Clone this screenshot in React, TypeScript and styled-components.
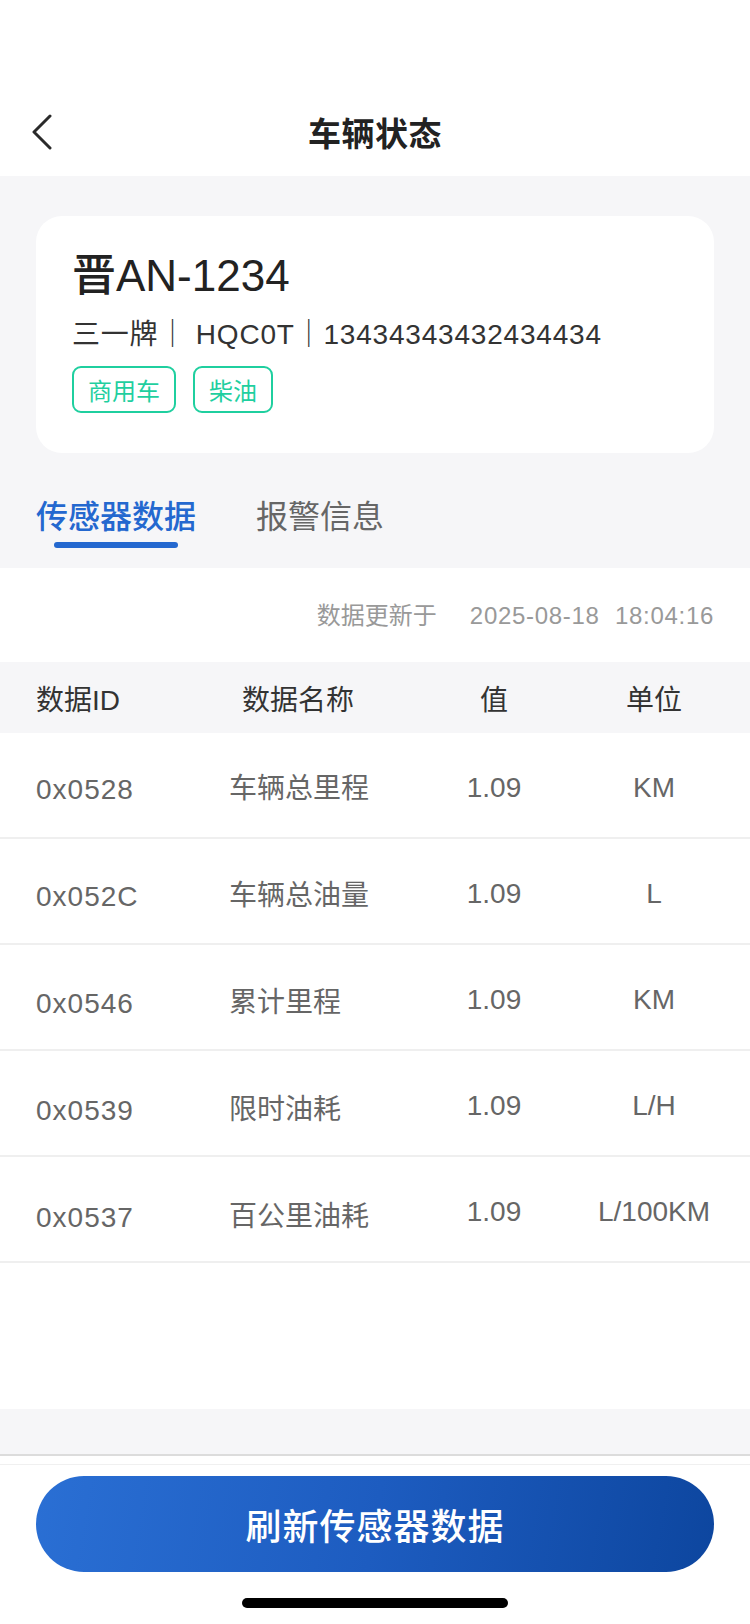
import styled, { createGlobalStyle } from "styled-components";

const GlobalStyle = createGlobalStyle`
  body {
    margin: 0;
    background: #f6f6f8;
    font-family: "Liberation Sans", "Noto Sans CJK SC", sans-serif;
  }
`;

const Page = styled.div`
  width: 750px;
  min-height: 1624px;
  display: flex;
  flex-direction: column;
  background: #f6f6f8;
`;

const NavBar = styled.header`
  height: 88px;
  padding-top: 88px;
  background: #fff;
  display: grid;
  grid-template-columns: 1fr auto 1fr;
  align-items: center;
`;

const BackButton = styled.button`
  justify-self: start;
  margin-left: 32px;
  padding: 0;
  border: none;
  background: none;
  display: flex;
  cursor: pointer;
`;

const NavTitle = styled.h1`
  margin: 0;
  font-size: 33px;
  font-weight: 700;
  color: #222;
  letter-spacing: 0.5px;
`;

const Content = styled.div`
  padding: 40px 36px 0;
`;

const VehicleCard = styled.section`
  background: #fff;
  border-radius: 26px;
  padding: 32px 36px 40px;
`;

const Plate = styled.div`
  font-size: 44px;
  line-height: 56px;
  font-weight: 500;
  color: #222;
`;

const VehicleMeta = styled.div`
  margin-top: 11px;
  font-size: 28px;
  line-height: 40px;
  letter-spacing: 0.8px;
  color: #333;
`;

const TagRow = styled.div`
  margin-top: 11px;
  display: flex;
  gap: 17px;
`;

const Tag = styled.span`
  box-sizing: border-box;
  height: 47px;
  padding: 0 14px;
  display: flex;
  align-items: center;
  border: 2px solid #1fcf9f;
  border-radius: 9px;
  font-size: 24px;
  color: #1fcf9f;
`;

const Tabs = styled.nav`
  margin-top: 42px;
  display: flex;
  gap: 60px;
  padding-bottom: 20px;
`;

const TabItem = styled.div<{ $active?: boolean }>`
  display: flex;
  flex-direction: column;
  align-items: center;
  font-size: 32px;
  line-height: 44px;
  font-weight: ${(p) => (p.$active ? 500 : 400)};
  color: ${(p) => (p.$active ? "#2468cf" : "#666")};

  &::after {
    content: "";
    width: 124px;
    height: 6px;
    margin-top: 3px;
    border-radius: 3px;
    background: ${(p) => (p.$active ? "#2468cf" : "transparent")};
  }
`;

const DataPanel = styled.section`
  background: #fff;
  min-height: 841px;
`;

const UpdatedAt = styled.div`
  padding: 32px 36px 0 0;
  display: flex;
  justify-content: flex-end;
  gap: 33px;
  font-size: 24px;
  line-height: 32px;
  color: #999;
`;

const DateTime = styled.span`
  letter-spacing: 0.7px;
  word-spacing: 8px;
`;

const columns = "193px 201px 128px 192px";

const HeadRow = styled.div`
  margin-top: 30px;
  height: 71px;
  padding-left: 36px;
  display: grid;
  grid-template-columns: ${columns};
  align-items: center;
  background: #f6f6f8;
  font-size: 28px;
  color: #333;
`;

const DataRow = styled.div`
  box-sizing: border-box;
  height: 106px;
  padding-left: 36px;
  display: grid;
  grid-template-columns: ${columns};
  align-items: center;
  border-bottom: 2px solid #efefef;
  font-size: 28px;
  color: #666;
`;

const Cell = styled.span<{ $align?: "left" | "center"; $indent?: number; $drop?: number; $spaced?: boolean }>`
  text-align: ${(p) => p.$align ?? "left"};
  padding-left: ${(p) => p.$indent ?? 0}px;
  padding-top: ${(p) => p.$drop ?? 0}px;
  letter-spacing: ${(p) => (p.$spaced ? "1px" : "normal")};
`;

const Gap = styled.div`
  height: 45px;
`;

const BottomBar = styled.footer`
  background: #fff;
  border-top: 2px solid #dcdcdc;
  padding-top: 8px;
  display: flex;
  flex-direction: column;
  align-items: center;
  flex: 1;
`;

const Hairline = styled.div`
  align-self: stretch;
  height: 1px;
  background: #f0f0f0;
`;

const RefreshButton = styled.button`
  margin-top: 11px;
  width: 678px;
  height: 96px;
  border: none;
  border-radius: 48px;
  background: linear-gradient(100deg, #2a6fd4 0%, #1d5cc0 50%, #0d469f 100%);
  color: #fff;
  font-family: inherit;
  font-size: 36px;
  font-weight: 500;
  letter-spacing: 1px;
  cursor: pointer;
`;

const HomeIndicator = styled.div`
  margin-top: 26px;
  width: 266px;
  height: 10px;
  border-radius: 5px;
  background: #000;
`;

const sensors = [
  { id: "0x0528", name: "车辆总里程", value: "1.09", unit: "KM" },
  { id: "0x052C", name: "车辆总油量", value: "1.09", unit: "L" },
  { id: "0x0546", name: "累计里程", value: "1.09", unit: "KM" },
  { id: "0x0539", name: "限时油耗", value: "1.09", unit: "L/H" },
  { id: "0x0537", name: "百公里油耗", value: "1.09", unit: "L/100KM" },
];

function BackIcon() {
  return (
    <svg width="20" height="36" viewBox="0 0 20 36">
      <polyline
        points="18,2 2,18 18,34"
        fill="none"
        stroke="#2a2a2a"
        strokeWidth="3"
        strokeLinecap="round"
        strokeLinejoin="round"
      />
    </svg>
  );
}

function App() {
  return (
    <>
      <GlobalStyle />
      <Page>
        <NavBar>
          <BackButton aria-label="返回">
            <BackIcon />
          </BackButton>
          <NavTitle>车辆状态</NavTitle>
          <span />
        </NavBar>

        <Content>
          <VehicleCard>
            <Plate>晋AN-1234</Plate>
            <VehicleMeta>三一牌｜ HQC0T｜13434343432434434</VehicleMeta>
            <TagRow>
              <Tag>商用车</Tag>
              <Tag>柴油</Tag>
            </TagRow>
          </VehicleCard>

          <Tabs>
            <TabItem $active>传感器数据</TabItem>
            <TabItem>报警信息</TabItem>
          </Tabs>
        </Content>

        <DataPanel>
          <UpdatedAt>
            <span>数据更新于</span>
            <DateTime>2025-08-18 18:04:16</DateTime>
          </UpdatedAt>
          <HeadRow>
            <Cell>数据ID</Cell>
            <Cell $indent={13}>数据名称</Cell>
            <Cell $align="center">值</Cell>
            <Cell $align="center">单位</Cell>
          </HeadRow>
          {sensors.map((s, i) => (
            <DataRow key={s.id}>
              <Cell $spaced $drop={10 + i * 2}>{s.id}</Cell>
              <Cell $drop={2 + i * 2}>{s.name}</Cell>
              <Cell $align="center" $drop={6}>{s.value}</Cell>
              <Cell $align="center" $drop={6}>{s.unit}</Cell>
            </DataRow>
          ))}
        </DataPanel>

        <Gap />

        <BottomBar>
          <Hairline />
          <RefreshButton>刷新传感器数据</RefreshButton>
          <HomeIndicator />
        </BottomBar>
      </Page>
    </>
  );
}

export default App;
